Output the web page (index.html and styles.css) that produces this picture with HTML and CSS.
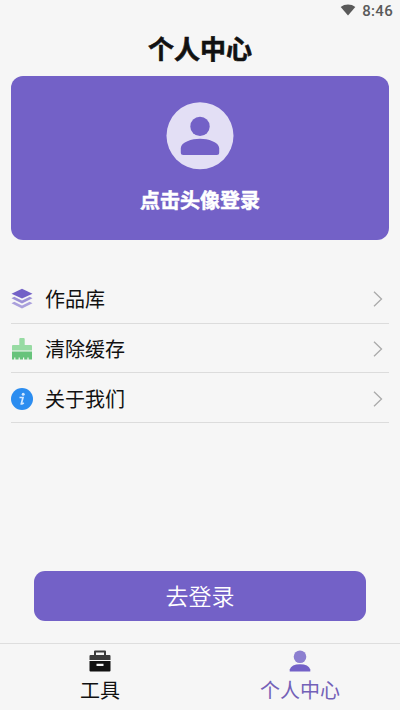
FILE: index.html
```html
<!DOCTYPE html>
<html lang="zh-CN">
<head>
<meta charset="utf-8">
<title>个人中心</title>
<link rel="stylesheet" href="styles.css">
</head>
<body>
<header class="status">
  <svg class="wifi" width="16" height="12" viewBox="0 0 16 12"><path d="M8 11.500L.7 2.900C4.800-.4 11.200-.4 15.300 2.900Z" fill="#5a5a5a"/></svg>
  <span>8:46</span>
</header>
<h1 class="title">个人中心</h1>
<section class="card">
  <svg width="68" height="68" viewBox="0 0 68 68"><circle cx="34" cy="33.700" r="33.500" fill="#e3dff5"/><circle cx="34" cy="24.400" r="9.700" fill="#7361c7"/><path d="M14.800 50.500V46C15 40 26 36.700 34 36.700S53 40 53.200 46v4.500q0 2.500-2.500 2.500H17.300q-2.500 0-2.500-2.500Z" fill="#7361c7"/></svg>
  <p class="hint">点击头像登录</p>
</section>
<ul class="menu">
  <li class="row">
    <svg class="icon" width="22" height="22" viewBox="0 0 22 22"><path d="M11 .8l10.500 4.900L11 10.600.5 5.700Z" fill="#7361c7"/><path d="M.5 10.200l2.800-1.400L11 12.400l7.700-3.600 2.800 1.400L11 15.500Z" fill="#9c90d6"/><path d="M.5 15.200l2.800-1.400L11 17.400l7.700-3.600 2.800 1.400L11 20.500Z" fill="#aaa0dc"/></svg>
    <span class="label">作品库</span>
    <svg class="arrow" width="10" height="16" viewBox="0 0 10 16"><path d="M1 .8L8.500 8 1 15.200"/></svg>
  </li>
  <li class="row">
    <svg class="icon" width="22" height="22" viewBox="0 0 22 22"><path d="M8.300 1q0-1 1-1h3.400q1 0 1 1v6H20q1 0 1 1v4.500H1V8q0-1 1-1h6.300Z" fill="#97dba3"/><path d="M1 13.500h20V21.500h-3.400v-2h-1.200v2h-3.200v-2H12v2H8.800v-2H7.600v2H4.400v-2H3.200v2H1Z" fill="#67c37b"/></svg>
    <span class="label">清除缓存</span>
    <svg class="arrow" width="10" height="16" viewBox="0 0 10 16"><path d="M1 .8L8.500 8 1 15.200"/></svg>
  </li>
  <li class="row">
    <svg class="icon" width="22" height="22" viewBox="0 0 22 22"><circle cx="11" cy="11" r="11" fill="#2c8df0"/><circle cx="12.200" cy="6.300" r="1.500" fill="#d3e8ff"/><path d="M8.500 9.500h3.500l-1.700 6.400q1 .2 2.500-1" fill="none" stroke="#d3e8ff" stroke-width="1.700"/></svg>
    <span class="label">关于我们</span>
    <svg class="arrow" width="10" height="16" viewBox="0 0 10 16"><path d="M1 .8L8.500 8 1 15.200"/></svg>
  </li>
</ul>
<button class="login">去登录</button>
<nav class="tabs">
  <a class="tab">
    <svg width="22" height="22" viewBox="0 0 22 22"><path d="M5 5V1.500q0-1 1-1h10q1 0 1 1V5h3.500q1 0 1 1v4H.5V6q0-1 1-1ZM7 5h8V2.500H7Z" fill="#3b3b3b" fill-rule="evenodd"/><path d="M.5 11h21v9.500q0 1-1 1h-19q-1 0-1-1ZM7.500 13.700v2.200h7v-2.200Z" fill="#111" fill-rule="evenodd"/></svg>
    <span>工具</span>
  </a>
  <a class="tab active">
    <svg width="22" height="22" viewBox="0 0 22 22"><circle cx="11" cy="6.800" r="6.300" fill="#8c7fd0"/><path d="M.7 21.500v-2Q2.500 14.200 11 14.200t10.300 5.300v2Z" fill="#7361c7"/></svg>
    <span>个人中心</span>
  </a>
</nav>
</body>
</html>
```
FILE: styles.css
```css
* { box-sizing: border-box; }
body {
  margin: 0;
  height: 710px;
  display: flex;
  flex-direction: column;
  overflow: hidden;
  background: #f6f6f6;
  color: #111;
  font-family: "Noto Sans CJK SC", sans-serif;
}
svg { display: block; flex: none; }
.status {
  height: 22px;
  padding: 0 7px 0 0;
  display: flex;
  justify-content: flex-end;
  gap: 6px;
  color: #5a5a5a;
  font: 500 15px/22px Roboto, sans-serif;
  letter-spacing: .3px;
}
.wifi { margin-top: 4px; }
.title {
  height: 54px;
  margin: 0;
  text-align: center;
  font-size: 26px;
  font-weight: 700;
  line-height: 51px;
  -webkit-text-stroke: .6px #111;
}
.card {
  height: 164px;
  margin: 0 11px;
  padding-top: 26px;
  display: flex;
  flex-direction: column;
  align-items: center;
  border-radius: 12px;
  background: #7361c7;
}
.hint {
  margin: 15px 0 0;
  color: #fff;
  font-size: 20px;
  font-weight: 700;
  line-height: 30px;
  -webkit-text-stroke: .5px #fff;
}
.menu {
  margin: 34px 11px 0;
  padding: 0;
  list-style: none;
}
.row {
  height: 49.700px;
  padding-top: 2px;
  display: flex;
  align-items: center;
  border-bottom: 1px solid #dcdcdc;
}
.label {
  flex: 1;
  margin-left: 12px;
  font-size: 20px;
  line-height: 30px;
}
.arrow {
  margin-right: 6px;
  fill: none;
  stroke: #aaa;
  stroke-width: 1.300;
}
.login {
  width: 332px;
  height: 50px;
  margin: auto auto 22px;
  padding: 0 0 1px;
  border: 0;
  border-radius: 11px;
  background: #7361c7;
  color: #fff;
  font: 350 23px/49px "Noto Sans CJK SC", sans-serif;
}
.tabs {
  height: 67px;
  display: flex;
  border-top: 1px solid #dedede;
}
.tab {
  flex: 1;
  padding-top: 6px;
  display: flex;
  flex-direction: column;
  align-items: center;
  gap: 3px;
  font-size: 20px;
  line-height: 30px;
}
.active { color: #7361b8; }
```
